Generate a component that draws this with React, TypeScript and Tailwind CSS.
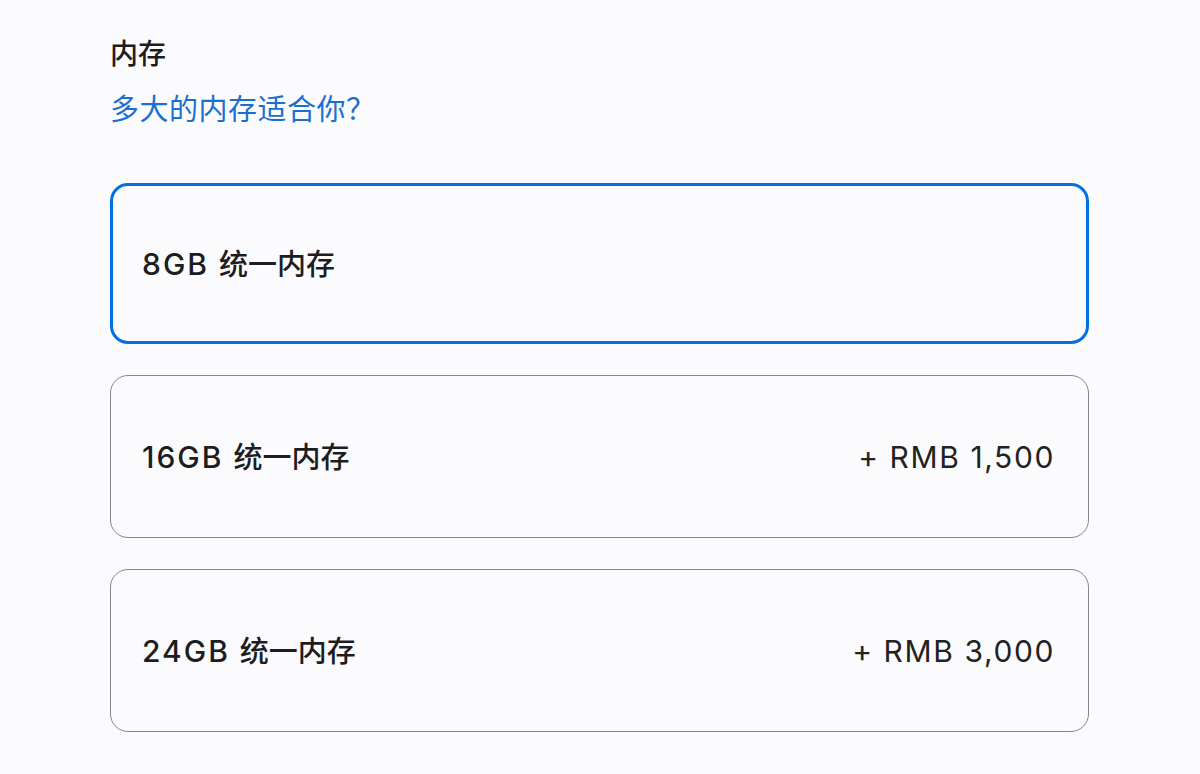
import React from "react"

interface MemoryOption {
  size: string
  price?: string
}

const options: MemoryOption[] = [
  { size: "8GB" },
  { size: "16GB", price: "+ RMB 1,500" },
  { size: "24GB", price: "+ RMB 3,000" },
]

const font = { fontFamily: 'Inter, "Noto Sans CJK SC", sans-serif' }

export default function App() {
  const selected = 0

  return (
    <div className="min-h-[774px] w-[1200px] bg-[#fbfbfd] pl-[110px] pt-[37px] text-[#1d1d1f]" style={font}>
      <h2 className="text-[28px] font-medium leading-[34px]">内存</h2>
      <p className="mt-[22px] text-[29px] leading-[34px] tracking-[0.5px] text-[#1a6fcf]">多大的内存适合你？</p>

      <div className="mt-[56px] flex w-[979px] flex-col gap-[31px]">
        {options.map((opt, i) => (
          <div
            key={opt.size}
            className={
              i === selected
                ? "flex h-[161px] items-center justify-between rounded-[18px] border-[3px] border-[#0071e3] pl-[29px] pr-[31px]"
                : "flex h-[163px] items-center justify-between rounded-[18px] border border-[#86868b] pl-[31px] pr-[33px]"
            }
          >
            <span className="text-[29px] font-medium leading-none">
              <span className="text-[30px] tracking-[2px]">{opt.size} </span>
              统一内存
            </span>
            {opt.price && (
              <span className="text-[30px] leading-none tracking-[1.6px] text-[#222]">{opt.price}</span>
            )}
          </div>
        ))}
      </div>
    </div>
  )
}
